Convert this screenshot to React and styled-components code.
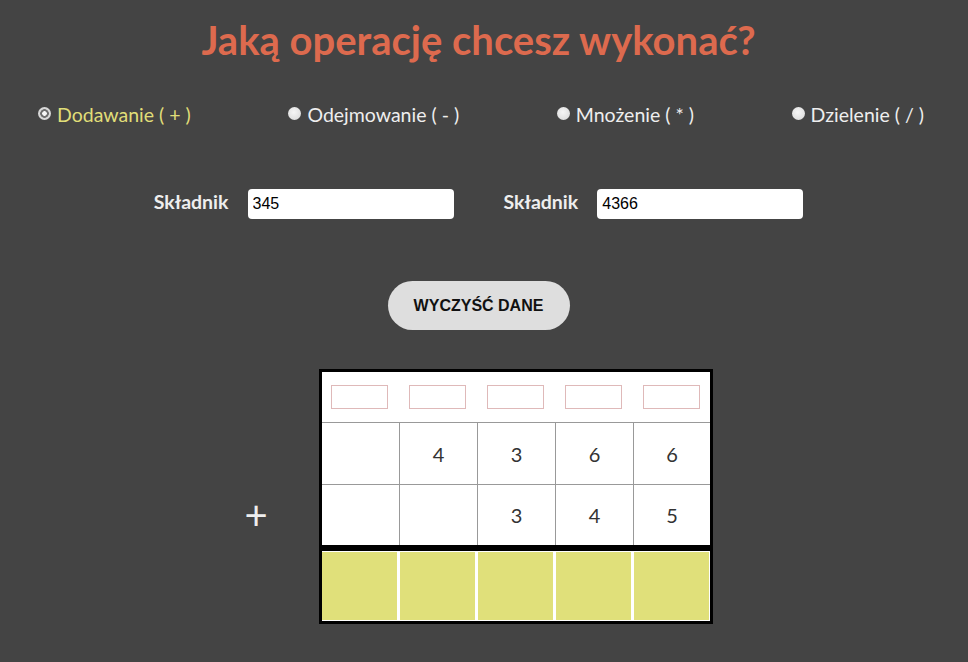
import React, { useState } from 'react';
import styled, { createGlobalStyle } from 'styled-components';

const GlobalStyle = createGlobalStyle`
  body {
    margin: 0;
    background: #444444;
    font-family: 'Lato', 'Open Sans', sans-serif;
  }
`;

const Page = styled.div`
  width: 957px;
  padding-bottom: 40px;
`;

const Title = styled.h1`
  margin: 0;
  padding-top: 16px;
  font-size: 40px;
  line-height: 48px;
  font-weight: 700;
  text-align: center;
  color: #dd6a4e;
`;

const RadioRow = styled.div`
  margin-top: 35px;
  height: 30px;
  display: flex;
  justify-content: space-between;
  align-items: center;
  padding: 0 33px 0 38px;
`;

const RadioLabel = styled.label`
  display: flex;
  align-items: center;
  gap: 6px;
  font-size: 19.5px;
  color: ${p => (p.$active ? '#e0de78' : '#eeeeee')};
  cursor: pointer;
`;

const RadioDot = styled.span`
  width: 13px;
  height: 13px;
  border-radius: 50%;
  margin-top: -2px;
  background: ${p =>
    p.$checked
      ? 'radial-gradient(circle, #f5f5f5 0 2px, #6e6e6e 2.6px 4px, #d8d8d8 4.6px)'
      : 'radial-gradient(circle at 45% 40%, #f6f6f6, #d6d6d6)'};
`;

const FieldsRow = styled.div`
  margin-top: 60px;
  display: flex;
  justify-content: center;
  gap: 50px;
`;

const Field = styled.div`
  display: flex;
  align-items: center;
  gap: 19px;
`;

const FieldLabel = styled.span`
  font-size: 19.5px;
  font-weight: 700;
  color: #eeeeee;
  padding-bottom: 5px;
`;

const NumberInput = styled.input`
  box-sizing: border-box;
  width: 206px;
  height: 30px;
  border: none;
  border-radius: 4px;
  padding: 0 5px;
  font-family: 'Liberation Sans', Arial, sans-serif;
  font-size: 16px;
  color: #000;
  outline: none;
`;

const ButtonRow = styled.div`
  margin-top: 62px;
  display: flex;
  justify-content: center;
`;

const ClearButton = styled.button`
  width: 182px;
  height: 49px;
  border: none;
  border-radius: 25px;
  background: #dedede;
  font-family: 'Liberation Sans', Arial, sans-serif;
  font-size: 16px;
  font-weight: 700;
  color: #111;
  cursor: pointer;
`;

const Workspace = styled.div`
  margin-top: 39px;
  display: flex;
  justify-content: center;
  gap: 51px;
`;

const SignColumn = styled.div`
  padding-top: 116px;
`;

const Sign = styled.div`
  width: 24px;
  height: 60px;
  display: flex;
  align-items: center;
  justify-content: center;
  font-size: 40px;
  color: #eeeeee;
`;

const Board = styled.div`
  width: 388px;
  border: 3px solid #000;
  background: #fff;
`;

const COLS = '77px 77px 77px 77px 76px';

const CarryRow = styled.div`
  display: grid;
  grid-template-columns: ${COLS};
  column-gap: 1px;
  height: 50px;
  align-items: center;
  justify-items: center;
  border-bottom: 1px solid #999;
`;

const CarryInput = styled.input`
  box-sizing: border-box;
  width: 57px;
  height: 24px;
  margin-left: -2px;
  border: 1px solid #dfb9b9;
  outline: none;
`;

const DigitGrid = styled.div`
  display: grid;
  grid-template-columns: ${COLS};
  grid-template-rows: 61px 60px;
  gap: 1px;
  background: #999;
  border-bottom: 6px solid #000;
`;

const Cell = styled.div`
  background: #fff;
  display: flex;
  align-items: center;
  justify-content: center;
  font-size: 20px;
  color: #333;
`;

const ResultRow = styled.div`
  display: grid;
  grid-template-columns: repeat(5, 75px);
  gap: 3px;
  padding: 1px 1px 1px 0;
  background: #fff;
`;

const ResultCell = styled.div`
  height: 68px;
  background: #e0e07a;
`;

const operations = [
  { id: 'add', label: 'Dodawanie ( + )' },
  { id: 'sub', label: 'Odejmowanie ( - )' },
  { id: 'mul', label: 'Mnożenie ( * )' },
  { id: 'div', label: 'Dzielenie ( / )' },
];

const toCells = (value) => {
  const digits = String(value).split('');
  return Array(Math.max(0, 5 - digits.length)).fill('').concat(digits).slice(-5);
};

const App = () => {
  const [op, setOp] = useState('add');
  const [a, setA] = useState('345');
  const [b, setB] = useState('4366');

  const top = toCells(b);
  const bottom = toCells(a);

  return (
    <Page>
      <GlobalStyle />
      <Title>Jaką operację chcesz wykonać?</Title>

      <RadioRow>
        {operations.map(o => (
          <RadioLabel key={o.id} $active={op === o.id} onClick={() => setOp(o.id)}>
            <RadioDot $checked={op === o.id} />
            {o.label}
          </RadioLabel>
        ))}
      </RadioRow>

      <FieldsRow>
        <Field>
          <FieldLabel>Składnik</FieldLabel>
          <NumberInput value={a} onChange={e => setA(e.target.value)} />
        </Field>
        <Field>
          <FieldLabel>Składnik</FieldLabel>
          <NumberInput value={b} onChange={e => setB(e.target.value)} />
        </Field>
      </FieldsRow>

      <ButtonRow>
        <ClearButton onClick={() => { setA(''); setB(''); }}>WYCZYŚĆ DANE</ClearButton>
      </ButtonRow>

      <Workspace>
        <SignColumn>
          <Sign>+</Sign>
        </SignColumn>
        <Board>
          <CarryRow>
            {[0, 1, 2, 3, 4].map(i => <CarryInput key={i} />)}
          </CarryRow>
          <DigitGrid>
            {top.map((d, i) => <Cell key={'t' + i}>{d}</Cell>)}
            {bottom.map((d, i) => <Cell key={'b' + i}>{d}</Cell>)}
          </DigitGrid>
          <ResultRow>
            {[0, 1, 2, 3, 4].map(i => <ResultCell key={i} />)}
          </ResultRow>
        </Board>
      </Workspace>
    </Page>
  );
};

export default App;
